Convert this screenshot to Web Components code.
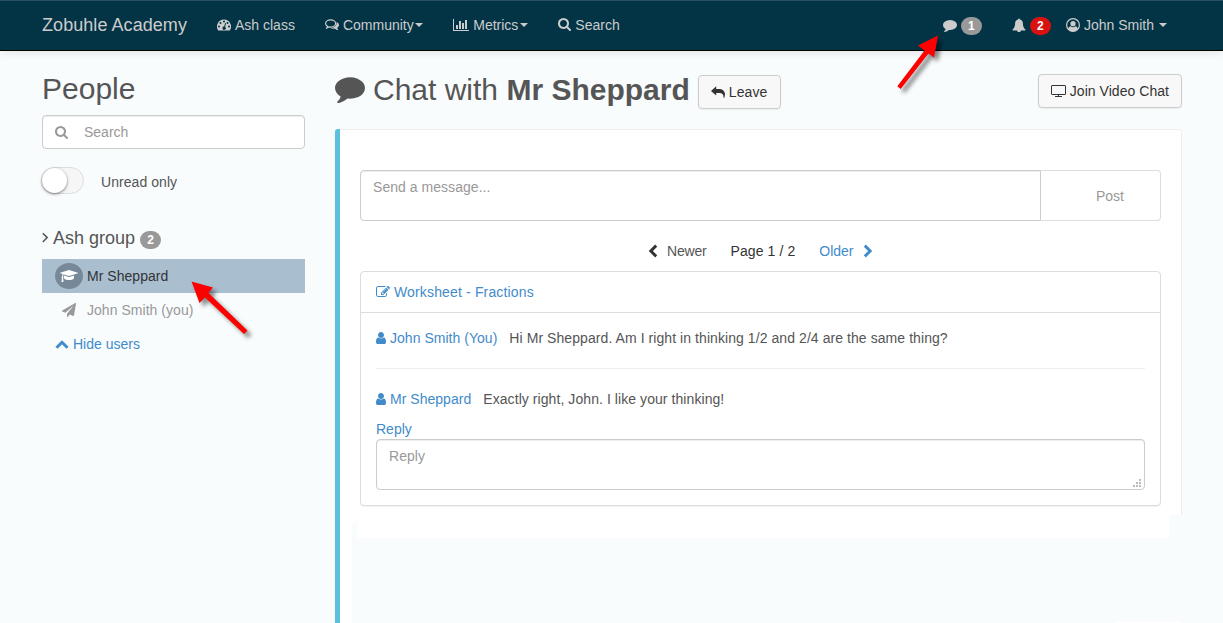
<!DOCTYPE html>
<html lang="en">
<head>
<meta charset="utf-8">
<title>Zobuhle Academy</title>
<style>
    html, body
    {
        margin: 0;
        padding: 0;
        height: 100%;
        overflow: hidden;
    }

    body
    {
        background-color: #f8fcfd;
        color: #555;
        font: 14px/20px "Liberation Sans", Arial, sans-serif;
    }
</style>
</head>
<body>
<academy-app></academy-app>

<script>
const icons = {
    search: ['64 128 1664 1664', '<path d="M1216 832q0-185-131.5-316.5t-316.5-131.5-316.5 131.5-131.5 316.5 131.5 316.5 316.5 131.5 316.5-131.5 131.5-316.5zm512 832q0 52-38 90t-90 38q-54 0-90-38l-343-342q-179 124-399 124-143 0-273.5-55.5t-225-150-150-225-55.5-273.5 55.5-273.5 150-225 225-150 273.5-55.5 273.5 55.5 225 150 150 225 55.5 273.5q0 220-124 399l343 343q37 37 37 90z"/>'],
    comment: ['0 0 1792 1792', '<path d="M1792 896q0 174-120 321.5t-326 233-450 85.5q-70 0-145-8-198 175-460 242-49 14-114 22-17 2-30.5-9t-17.5-29v-1q-3-4-.5-12t2-10 4.5-9.5l6-9 7-8.5 8-9q7-8 31-34.5t34.5-38 31-39.5 32.5-51 27-59 26-76q-157-89-247.5-220t-90.5-281q0-130 71-248.5t191-204.5 286-136.5 348-50.5q244 0 450 85.5t326 233 120 321.5z"/>'],
    comments: ['0 0 14 14', '<path d="M5.600 1.900C2.800 1.900.6 3.500.6 5.500c0 1.200.8 2.200 1.900 2.800l-.7 1.700 2.100-1.100c.6.1 1.100.2 1.700.2 2.800 0 5-1.600 5-3.600S8.400 1.900 5.600 1.900z" fill="none" stroke="currentColor" stroke-width="1.150"/><path d="M11.500 3.900c1.500.6 2.500 1.800 2.500 3.200 0 1.100-.7 2.200-1.900 2.800.2.800.7 1.200 1.200 1.700.1.200 0 .5-.3.500-1.200-.1-2.100-.7-2.800-1.400-1.800.3-3.800 0-5.200-.9 3.900.3 7.200-2.100 6.500-5.900z"/>'],
    user: ['256 128 1280 1536', '<path d="M1536 1399q0 109-62.5 187t-150.500 78h-854q-88 0-150.500-78t-62.500-187q0-85 8.500-160.500t31.500-152 58.500-131 94-89 134.500-34.500q131 128 313 128t313-128q76 0 134.500 34.500t94 89 58.500 131 31.500 152 8.500 160.500zm-256-887q0 159-112.500 271.500t-271.500 112.500-271.500-112.500-112.500-271.500 112.500-271.500 271.500-112.500 271.500 112.500 112.500 271.500z"/>'],
    edit: ['0 0 1792 1792', '<path d="M888 1184l116-116-152-152-116 116v56h96v96h56zm440-720q-16-16-33 1l-350 350q-17 17-1 33t33-1l350-350q17-17 1-33zm80 594v190q0 119-84.500 203.500t-203.500 84.500h-832q-119 0-203.500-84.500t-84.500-203.500v-832q0-119 84.500-203.500t203.500-84.500h832q63 0 117 25 15 7 18 23 3 17-9 29l-49 49q-14 14-32 8-23-6-45-6h-832q-66 0-113 47t-47 113v832q0 66 47 113t113 47h832q66 0 113-47t47-113v-126q0-13 9-22l64-64q15-15 35-7t20 29zm-96-738l288 288-672 672h-288v-288zm444 132l-92 92-288-288 92-92q28-28 68-28t68 28l152 152q28 28 28 68t-28 68z"/>'],
    chart: ['0 0 2048 1792', '<path d="M640 896v512h-256v-512h256zm384-512v1024h-256v-1024h256zm1024 1152v128h-2048v-1536h128v1408h1920zm-640-896v768h-256v-768h256zm384-384v1152h-256v-1152h256z"/>'],
    cap: ['0 0 2304 1792', '<path d="M1774 836l18 316q4 69-82 128t-235 93.500-323 34.500-323-34.500-235-93.500-82-128l18-316 574 181q22 7 48 7t48-7zm530-324q0 23-22 31l-1120 352q-4 1-10 1t-10-1l-652-206q-43 34-71 111.500t-34 178.500q63 36 63 109 0 69-58 107l58 433q2 14-8 25-9 11-24 11h-192q-15 0-24-11-10-11-8-25l58-433q-58-38-58-107 0-73 65-111 11-207 98-330l-333-104q-22-8-22-31t22-31l1120-352q4-1 10-1t10 1l1120 352q22 8 22 31z"/>'],
    plane: ['0 0 1792 1792', '<path d="M1764 11q33 24 27 64l-256 1536q-5 29-32 45-14 8-31 8-11 0-24-5l-453-185-242 295q-18 23-49 23-13 0-22-4-19-7-30.500-23.500t-11.500-36.500v-349l864-1059-1069 925-395-162q-37-14-40-55-2-40 32-59l1664-960q15-9 32-9 20 0 36 11z"/>'],
    dash: ['0 0 14 14', '<path fill-rule="evenodd" d="M7 1.500a7 7 0 0 1 5.900 10.800q-.2.200-.5.200H1.600q-.3 0-.5-.2A7 7 0 0 1 7 1.500zM2 7.500a1 1 0 1 0 0 2 1 1 0 0 0 0-2zM3.500 4a1 1 0 1 0 0 2 1 1 0 0 0 0-2zM7 2.500a1 1 0 1 0 0 2 1 1 0 0 0 0-2zM10.500 4a1 1 0 1 0 0 2 1 1 0 0 0 0-2zM12 7.500a1 1 0 1 0 0 2 1 1 0 0 0 0-2zM8.100 5L7.200 8.600a1.600 1.600 0 1 0 .9.300L9 5.300z"/>'],
    bell: ['0 0 14 14', '<path d="M7 .4c.5 0 .9.300.9.800v.4c2 .4 3 2 3 3.900 0 3 .9 4.700 2.600 5.900 0 .6-.4 1-1 1H8.800a1.800 1.800 0 0 1-3.600 0H1.500c-.6 0-1-.4-1-1 1.700-1.200 2.600-2.900 2.600-5.900 0-1.900 1-3.500 3-3.900v-.4c0-.5.4-.8.9-.8z"/>'],
    account: ['0 0 14 14', '<circle cx="7" cy="7" r="6.400" fill="none" stroke="currentColor" stroke-width="1.200"/><circle cx="7" cy="5.700" r="2.600"/><path d="M2.200 11.200c.3-1.700 1-2.700 2.300-2.900 1.500 1.200 3.500 1.200 5 0 1.300.2 2 1.200 2.300 2.900A6.500 6.500 0 0 1 7 13.500a6.500 6.500 0 0 1-4.800-2.300z"/>'],
    leave: ['0 0 14 14', '<path d="M5.200 1.200v2.700h2.300c4.100 0 6.500 2 6.500 5.800 0 1.300-.4 2.300-.9 3.300h-.5c.2-3.800-1.200-5.100-5.100-5.100H5.200v2.700L0 5.900z"/>'],
    screen: ['0 0 15 14', '<path d="M.5 2q0-.5.5-.5h13q.5 0 .5.500v8q0 .5-.5.500H1q-.5 0-.5-.5zM7.500 11v2M4 12.500h7" fill="none" stroke="currentColor"/>'],
    angle: ['0 0 7 14', '<path d="M.8 2.200L5.200 6.600 .8 11" fill="none" stroke="currentColor" stroke-width="1.500"/>'],
    up: ['0 0 14 14', '<path d="M1.500 10.800L7 5.300l5.500 5.500" fill="none" stroke="currentColor" stroke-width="3"/>'],
    left: ['0 0 10 14', '<path d="M8.200 1.600L2.800 7l5.400 5.400" fill="none" stroke="currentColor" stroke-width="2.900"/>'],
    right: ['0 0 10 14', '<path d="M1.800 1.600L7.200 7l-5.400 5.400" fill="none" stroke="currentColor" stroke-width="2.900"/>'],
    grip: ['0 0 8 8', '<path d="M6 0h2v2H6zM3 3h2v2H3zM6 3h2v2H6zM0 6h2v2H0zM3 6h2v2H3zM6 6h2v2H6z"/>']
};

class BaseElement extends HTMLElement {

    constructor() {
        super();
        this.shadowDOM = this.attachShadow({mode: "open"});
    }

    connectedCallback() {
        this.render();
    }
}

// <ui-icon name="search" w="14" h="14">
class UiIcon extends BaseElement {
    render() {
        const [box, shape] = icons[this.getAttribute("name")];
        const w = this.getAttribute("w") || 14;
        const h = this.getAttribute("h") || 14;
        this.shadowDOM.innerHTML = `
            <style>
                :host { display: inline-block; flex: none; width: ${w}px; height: ${h}px; }
                svg { display: block; fill: currentColor; }
            </style>
            <svg width="${w}" height="${h}" viewBox="${box}">${shape}</svg>`;
    }
}

class CountBadge extends BaseElement {
    render() {
        this.shadowDOM.innerHTML = `
            <style>
                :host
                {
                    display: inline-block;
                    box-sizing: border-box;
                    min-width: 21px;
                    padding: 3px 7px;
                    border-radius: 10px;
                    background-color: var(--badge, #999);
                    color: #fff;
                    font-size: 12px;
                    font-weight: bold;
                    line-height: 12px;
                    text-align: center;
                }
            </style>
            <slot></slot>`;
    }
}

class NavItem extends BaseElement {
    render() {
        this.shadowDOM.innerHTML = `
            <style>
                :host { display: flex; align-items: center; padding: 0 15px; }
                slot { display: flex; align-items: center; gap: 4px; }
                i
                {
                    border: 4px solid transparent;
                    border-top-color: currentColor;
                    border-bottom: 0;
                    margin-left: var(--caret-gap, 2px);
                }
            </style>
            <slot></slot>${this.hasAttribute("caret") ? "<i></i>" : ""}`;
    }
}

class AppNavbar extends BaseElement {
    render() {
        this.shadowDOM.innerHTML = `
            <style>
                :host
                {
                    display: flex;
                    box-sizing: border-box;
                    height: 51px;
                    padding: 0 41px 2px 27px;
                    background-color: #033446;
                    border-top: 1px solid #2a5163;
                    border-bottom: 1px solid #000;
                    box-shadow: 0 1px 10px rgba(0, 0, 0, .1);
                    color: #ccc;
                }
                .brand { font-size: 18px; letter-spacing: .06px; }
                .right { display: flex; margin-left: auto; }
                .bell { padding-right: 0; }
                count-badge { margin-top: 2px; }
            </style>
            <nav-item class="brand">Zobuhle Academy</nav-item>
            <nav-item><ui-icon name="dash"></ui-icon>Ash class</nav-item>
            <nav-item caret style="--caret-gap: 1.5px"><ui-icon name="comments"></ui-icon>Community</nav-item>
            <nav-item caret><ui-icon name="chart" w="16"></ui-icon>Metrics</nav-item>
            <nav-item><ui-icon name="search" w="13" h="13"></ui-icon>Search</nav-item>
            <div class="right">
                <nav-item><ui-icon name="comment"></ui-icon><count-badge>1</count-badge></nav-item>
                <nav-item class="bell"><ui-icon name="bell"></ui-icon><count-badge style="--badge: #d9110f">2</count-badge></nav-item>
                <nav-item caret style="--caret-gap: 5px"><ui-icon name="account"></ui-icon>John Smith</nav-item>
            </div>`;
    }
}

class UiButton extends BaseElement {
    render() {
        this.shadowDOM.innerHTML = `
            <style>
                :host
                {
                    display: flex;
                    align-items: center;
                    gap: 4px;
                    box-sizing: border-box;
                    height: 34px;
                    padding: 0 12px;
                    border: 1px solid #ccc;
                    border-radius: 4px;
                    background-color: #f8f8f8;
                    box-shadow: 0 1px 2px rgba(0, 0, 0, .06);
                    color: #333;
                    font-size: 14px;
                    letter-spacing: .04px;
                    white-space: nowrap;
                }
            </style>
            <slot></slot>`;
    }
}

class PersonRow extends BaseElement {
    render() {
        this.shadowDOM.innerHTML = `
            <style>
                :host { display: flex; align-items: center; height: 34px; padding-left: 13px; color: #999; letter-spacing: .04px; }
                :host([selected]) { background-color: #a9bfd0; color: #333; }
                span { display: flex; align-items: center; justify-content: center; width: 28px; height: 26px; margin-right: 4px; }
                :host([selected]) span { border-radius: 50%; background-color: #778899; color: #fff; }
            </style>
            <span><ui-icon name="${this.getAttribute("icon")}" w="${this.getAttribute("w")}" h="14"></ui-icon></span>
            <slot></slot>`;
    }
}

class PeopleSidebar extends BaseElement {
    render() {
        this.shadowDOM.innerHTML = `
            <style>
                :host { display: block; width: 263px; }
                h2 { margin: 0; font-size: 30px; font-weight: 500; line-height: 33px; padding: 21px 0 10px; }
                .search
                {
                    display: flex;
                    align-items: center;
                    gap: 16px;
                    box-sizing: border-box;
                    height: 34px;
                    padding-left: 12px;
                    border: 1px solid #ccc;
                    border-radius: 4px;
                    background-color: #fff;
                    box-shadow: inset 0 1px 1px rgba(0, 0, 0, .075);
                    color: #999;
                }
                .toggle { display: flex; align-items: center; gap: 17px; margin: 18px 0 0 -1px; height: 27px; }
                .track
                {
                    box-sizing: border-box;
                    width: 43px;
                    height: 27px;
                    border: 1px solid #ddd;
                    border-radius: 14px;
                    background-color: #f6f6f6;
                }
                .knob
                {
                    width: 25px;
                    height: 25px;
                    border-radius: 50%;
                    background-color: #fff;
                    box-shadow: 0 1px 3px rgba(0, 0, 0, .5);
                }
                .toggle span { padding-top: 3px; letter-spacing: .06px; }
                h4 { display: flex; align-items: center; margin: 0; padding-top: 34px; height: 20px; font-size: 18px; font-weight: 500; margin-bottom: 11px; }
                h4 ui-icon { margin-right: 4px; }
                h4 count-badge { margin: 3px 0 0 5px; }
                .hide { display: flex; align-items: center; gap: 4px; height: 34px; padding-left: 13px; color: #428bca; }
            </style>
            <h2>People</h2>
            <div class="search"><ui-icon name="search" w="13" h="13"></ui-icon><span>Search</span></div>
            <div class="toggle"><div class="track"><div class="knob"></div></div><span>Unread only</span></div>
            <h4><ui-icon name="angle" w="7"></ui-icon>Ash group<count-badge>2</count-badge></h4>
            <person-row icon="cap" w="18" selected>Mr Sheppard</person-row>
            <person-row icon="plane" w="14">John Smith (you)</person-row>
            <div class="hide"><ui-icon name="up"></ui-icon>Hide users</div>`;
    }
}

class TextBox extends BaseElement {
    render() {
        this.shadowDOM.innerHTML = `
            <style>
                :host
                {
                    display: flex;
                    justify-content: space-between;
                    box-sizing: border-box;
                    height: 51px;
                    padding: 6px 3px 2px 12px;
                    border: 1px solid #ccc;
                    border-radius: 4px;
                    background-color: #fff;
                    box-shadow: inset 0 1px 1px rgba(0, 0, 0, .075);
                    color: #999;
                    letter-spacing: .04px;
                }
                ui-icon { align-self: flex-end; color: #bbb; }
            </style>
            <slot></slot>${this.hasAttribute("grip") ? '<ui-icon name="grip" w="8" h="8"></ui-icon>' : ""}`;
    }
}

class ChatMessage extends BaseElement {
    render() {
        this.shadowDOM.innerHTML = `
            <style>
                :host { display: flex; align-items: center; height: 20px; letter-spacing: .07px; white-space: nowrap; }
                .author { display: flex; align-items: center; gap: 4px; margin-right: 12px; color: #428bca; letter-spacing: .03px; }
            </style>
            <span class="author"><ui-icon name="user" w="10" h="12"></ui-icon>${this.getAttribute("author")}</span>
            <slot></slot>`;
    }
}

class ChatThread extends BaseElement {
    render() {
        this.shadowDOM.innerHTML = `
            <style>
                :host
                {
                    display: block;
                    box-sizing: border-box;
                    height: 235px;
                    border: 1px solid #ddd;
                    border-radius: 4px;
                    background-color: #fff;
                    box-shadow: 0 1px 1px rgba(0, 0, 0, .05);
                }
                .title { display: flex; align-items: center; gap: 4px; height: 40px; padding-left: 15px; border-bottom: 1px solid #ddd; color: #428bca; letter-spacing: .15px; }
                .body { padding: 15px 15px 0; }
                hr { margin: 20px 0; border: 0; border-top: 1px solid #eee; }
                .reply { margin-top: 10px; color: #428bca; }
            </style>
            <div class="title"><ui-icon name="edit"></ui-icon>Worksheet - Fractions</div>
            <div class="body">
                <chat-message author="John Smith (You)">Hi Mr Sheppard. Am I right in thinking 1/2 and 2/4 are the same thing?</chat-message>
                <hr>
                <chat-message author="Mr Sheppard">Exactly right, John. I like your thinking!</chat-message>
                <div class="reply">Reply</div>
                <text-box grip>Reply</text-box>
            </div>`;
    }
}

class ChatPanel extends BaseElement {
    render() {
        this.shadowDOM.innerHTML = `
            <style>
                :host { display: flex; flex-direction: column; width: 847px; }
                header { display: flex; align-items: center; height: 78px; flex: none; }
                header > ui-icon { margin-bottom: 4px; }
                h1 { margin: 0; font-size: 30px; font-weight: 500; line-height: 33px; white-space: nowrap; padding: 0 0 2px 8px; }
                .leave { width: 83px; margin: 4px 0 0 8px; letter-spacing: .1px; }
                .join { margin: 2px 0 0 auto; }
                .callout
                {
                    flex: 1;
                    display: flex;
                    flex-direction: column;
                    border-left: 5px solid #5bc0de;
                    border-radius: 3px 3px 0 0;
                }
                .content
                {
                    box-sizing: border-box;
                    height: 386px;
                    padding: 40px 20px 0;
                    border-top: 1px solid #eee;
                    border-right: 1px solid #eee;
                    border-top-right-radius: 3px;
                    background-color: #fff;
                }
                .composer { display: flex; }
                .composer text-box { width: 681px; border-radius: 4px 0 0 4px; }
                .post
                {
                    display: flex;
                    align-items: center;
                    justify-content: center;
                    box-sizing: border-box;
                    width: 120px;
                    padding-left: 19px;
                    border: 1px solid #ddd;
                    border-left: 0;
                    border-radius: 0 4px 4px 0;
                    color: #999;
                }
                .pager { display: flex; height: 20px; margin: 20px 0 10px 288px; align-items: center; color: #333; }
                .pager .newer { margin: 0 24px 0 9px; color: #555; letter-spacing: -.2px; }
                .pager .page { letter-spacing: .1px; }
                .pager .older { display: flex; align-items: center; gap: 9px; margin-left: 24px; color: #428bca; }
                .tail { display: grid; grid-template-columns: 12px 5px 758px 66px; grid-template-rows: 8px 15px 1fr 1px; flex: 1; }
                .tail div { background-color: #fff; }
                .tail .top { grid-column: 1 / 5; margin-right: 12px; }
                .tail .edge { grid-column: 1; grid-row: 2 / 5; }
                .tail .bottom { grid-column: 3 / 5; grid-row: 2; margin-right: 12px; }
                .tail .next { grid-column: 4; grid-row: 4; }
            </style>
            <header>
                <ui-icon name="comment" w="30" h="30"></ui-icon>
                <h1>Chat with <b>Mr Sheppard</b></h1>
                <ui-button class="leave"><ui-icon name="leave"></ui-icon>Leave</ui-button>
                <ui-button class="join"><ui-icon name="screen" w="15"></ui-icon>Join Video Chat</ui-button>
            </header>
            <div class="callout">
                <div class="content">
                    <div class="composer">
                        <text-box>Send a message...</text-box>
                        <div class="post">Post</div>
                    </div>
                    <div class="pager">
                        <ui-icon name="left" w="10"></ui-icon>
                        <span class="newer">Newer</span>
                        <span class="page">Page 1 / 2</span>
                        <span class="older">Older <ui-icon name="right" w="10"></ui-icon></span>
                    </div>
                    <chat-thread></chat-thread>
                </div>
                <div class="tail">
                    <div class="top"></div>
                    <div class="edge"></div>
                    <div class="bottom"></div>
                    <div class="next"></div>
                </div>
            </div>`;
    }
}

// red pointers drawn over the page
class PointerArrows extends BaseElement {
    render() {
        this.shadowDOM.innerHTML = `
            <style>
                :host { position: absolute; top: 0; left: 0; pointer-events: none; }
                svg { display: block; fill: #fe0000; filter: drop-shadow(4px 4px 2px rgba(0, 0, 0, .45)); }
            </style>
            <svg width="1223" height="360">
                <path d="M938 35.500L934 57.500 928.500 53.500 900.700 89 897.300 86.300 924.500 50.500 918 45.500z"/>
                <path d="M191.500 281.500L213 287.500 208.500 293 247.500 330.500 244 334 205 297.500 199.500 303z"/>
            </svg>`;
    }
}

class AcademyApp extends BaseElement {
    render() {
        this.shadowDOM.innerHTML = `
            <style>
                :host { display: flex; flex-direction: column; height: 100vh; }
                main { flex: 1; display: flex; gap: 30px; padding-left: 42px; }
            </style>
            <app-navbar></app-navbar>
            <main>
                <people-sidebar></people-sidebar>
                <chat-panel></chat-panel>
            </main>
            <pointer-arrows></pointer-arrows>`;
    }
}

customElements.define("ui-icon", UiIcon);
customElements.define("count-badge", CountBadge);
customElements.define("nav-item", NavItem);
customElements.define("app-navbar", AppNavbar);
customElements.define("ui-button", UiButton);
customElements.define("person-row", PersonRow);
customElements.define("people-sidebar", PeopleSidebar);
customElements.define("text-box", TextBox);
customElements.define("chat-message", ChatMessage);
customElements.define("chat-thread", ChatThread);
customElements.define("chat-panel", ChatPanel);
customElements.define("pointer-arrows", PointerArrows);
customElements.define("academy-app", AcademyApp);
</script>
</body>
</html>
